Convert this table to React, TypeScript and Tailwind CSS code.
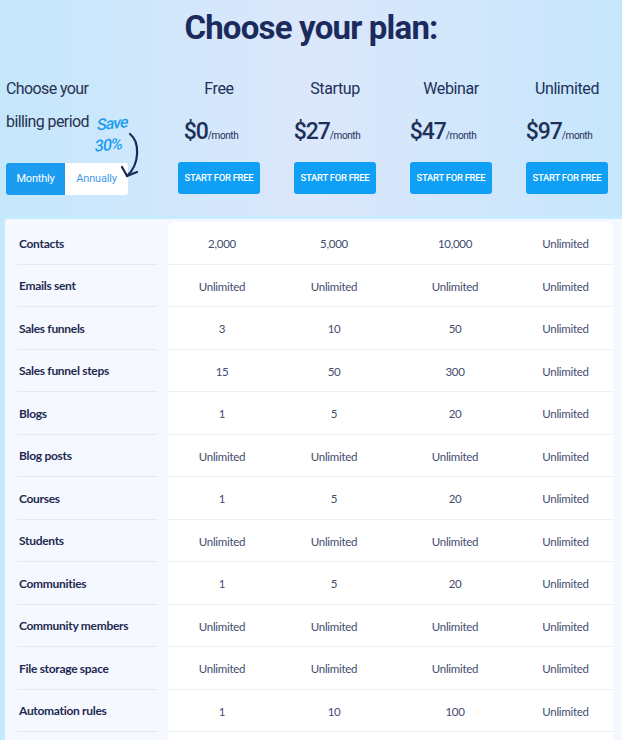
import React from 'react';

const plans = [
  { name: 'Free', price: '$0' },
  { name: 'Startup', price: '$27' },
  { name: 'Webinar', price: '$47' },
  { name: 'Unlimited', price: '$97' },
];

const U = 'Unlimited';

const rows: [string, string[]][] = [
  ['Contacts', ['2,000', '5,000', '10,000', U]],
  ['Emails sent', [U, U, U, U]],
  ['Sales funnels', ['3', '10', '50', U]],
  ['Sales funnel steps', ['15', '50', '300', U]],
  ['Blogs', ['1', '5', '20', U]],
  ['Blog posts', [U, U, U, U]],
  ['Courses', ['1', '5', '20', U]],
  ['Students', [U, U, U, U]],
  ['Communities', ['1', '5', '20', U]],
  ['Community members', [U, U, U, U]],
  ['File storage space', [U, U, U, U]],
  ['Automation rules', ['1', '10', '100', U]],
  ['', ['', '', '', '']],
];

const head = "font-['Roboto','Liberation_Sans',sans-serif]";
const body = "font-['Lato','Liberation_Sans',sans-serif]";

export default function App() {
  return (
    <div className="relative h-[740px] w-[622px] overflow-hidden bg-[radial-gradient(ellipse_50%_70%_at_53%_98%,#bfc1f1_0%,#cbd0f5_40%,rgba(210,225,250,0)_100%),linear-gradient(90deg,#c4e7fc_0%,#dce7fb_50%,#c6e6fc_100%)]">
      {/* Header */}
      <div className="h-[216px]">
        <div className="flex h-[56px] items-center justify-center">
          <h1 className={`${head} text-[33px] font-bold leading-[40px] tracking-[-0.8px] text-[#1b2b5c]`}>
            Choose your plan:
          </h1>
        </div>

        <div className="grid grid-cols-[161px_116px_116px_116px_116px]">
          {/* Billing period */}
          <div className="relative pl-[6px]">
            <div className={`${head} mt-[16px] text-[16px] leading-[33px] tracking-[-0.6px] text-[#27324f]`}>
              <div>Choose your</div>
              <div>billing period</div>
            </div>
            <div className={`${head} absolute left-[96px] top-[57px] -rotate-6 -skew-x-12 text-[16px] font-medium leading-[21px] tracking-[-1px] text-[#1d9cf2]`}>
              <div>Save</div>
              <div>30%</div>
            </div>
            <svg className="absolute left-[116px] top-[74px]" width="26" height="54" viewBox="0 0 26 54" fill="none">
              <path d="M14 4 C24 12 24 34 11 46" stroke="#1b2a5b" strokeWidth="2.2" strokeLinecap="round" />
              <path d="M6 37 L11 46 L21 42" stroke="#1b2a5b" strokeWidth="2.2" strokeLinecap="round" strokeLinejoin="round" />
            </svg>
            <div className={`${head} mt-[25px] flex h-[32px] w-[122px] overflow-hidden rounded-[3px] text-[11px] tracking-[-0.2px]`}>
              <div className="flex w-[59px] items-center justify-center bg-[#1c9cf1] text-white">Monthly</div>
              <div className="flex flex-1 items-center justify-center bg-white text-[#3f9be6]">Annually</div>
            </div>
          </div>

          {plans.map((p) => (
            <div key={p.name} className={`${head} flex flex-col items-center text-[#213058]`}>
              <div className="mt-[21px] h-[24px] text-[16px] leading-[24px] tracking-[-0.4px]">{p.name}</div>
              <div className="mt-[18px] flex h-[26px] items-baseline pr-[16px]">
                <span className="text-[23px] font-medium leading-[26px] tracking-[-1px]">{p.price}</span>
                <span className="text-[10px] tracking-[-0.4px]">/month</span>
              </div>
              <button className="mt-[17px] h-[32px] w-[82px] rounded-[3px] bg-[#0fa0f5] text-[9.5px] font-medium tracking-[-0.3px] text-white">
                START FOR FREE
              </button>
            </div>
          ))}
        </div>
      </div>

      {/* Comparison table */}
      <div className="ml-[2px] w-[640px] rounded-tl-[6px] border-l-[3px] border-t-[3px] border-[#c5ecfd] bg-[#f5f9ff] pt-[3px]">
        <div className={`${body} flex`}>
          <div className="w-[163px] pl-[12px] pr-[11px]">
            {rows.map(([label], r) => (
              <div
                key={r}
                className="flex h-[42.5px] items-center border-b border-[#e4eaf3] pl-[2px] pt-[2px] text-[12px] font-bold tracking-[-0.3px] text-[#1f2a50]"
              >
                {label}
              </div>
            ))}
          </div>
          <div className="w-[445px] rounded-t-[6px] bg-white">
            {rows.map(([, vals], r) => (
              <div
                key={r}
                className="grid h-[42.5px] grid-cols-[108px_116px_126px_95px] items-center border-b border-[#edf1f6] pt-[2px] text-[11.5px] tracking-[-0.3px] text-[#434c6e]"
              >
                {vals.map((v, i) => (
                  <div key={i} className="text-center">
                    {v}
                  </div>
                ))}
              </div>
            ))}
          </div>
        </div>
      </div>
    </div>
  );
}
